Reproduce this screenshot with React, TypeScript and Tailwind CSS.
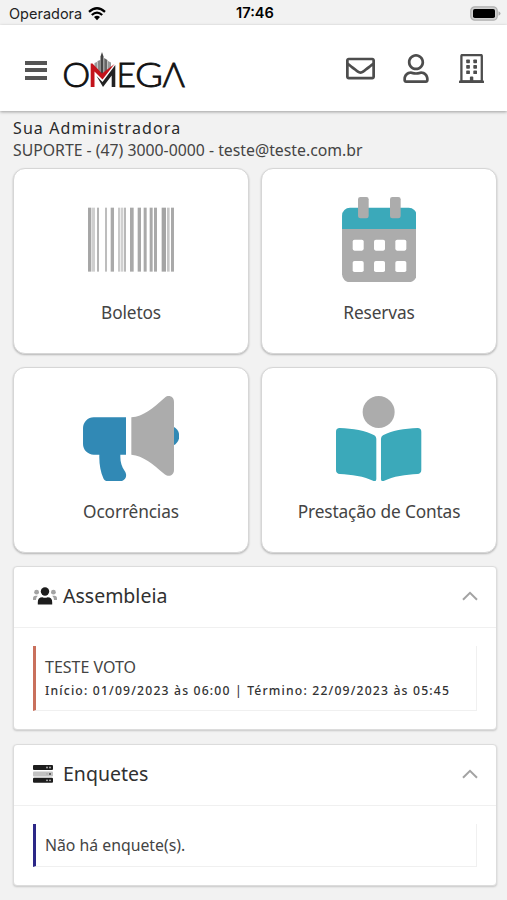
import { ReactNode, useState } from "react";
import { FaRegEnvelope, FaRegUser } from "react-icons/fa";

// [x, width, fill]
const bars: [number, number, string][] = [
  [264, 10, "#a6a6a6"],
  [276, 9, "#cfcfcf"],
  [291, 6, "#b4b4b4"],
  [315, 6, "#bdbdbd"],
  [332, 10, "#a9a9a9"],
  [354, 7, "#c9c9c9"],
  [363, 7, "#d0d0d0"],
  [372, 6, "#b8b8b8"],
  [390, 11, "#a9a9a9"],
  [413, 10, "#a9a9a9"],
  [431, 9, "#a9a9a9"],
  [449, 9, "#a9a9a9"],
  [462, 9, "#a9a9a9"],
  [485, 13, "#a4a4a4"],
  [501, 8, "#c6c6c6"],
  [513, 9, "#a9a9a9"],
];

function BarcodeIcon() {
  return (
    <svg viewBox="264 0 258 256" className="h-[85.3px] w-[86px]">
      {bars.map(([x, width, fill]) => (
        <rect key={x} x={x} y="32" width={width} height="192" fill={fill} />
      ))}
    </svg>
  );
}

function CalendarIcon() {
  return (
    <svg viewBox="0 0 448 512" className="h-[85.3px] w-[74.7px]">
      <path d="M0 192h448v272a48 48 0 0 1-48 48H48a48 48 0 0 1-48-48z" fill="#acacac" />
      <path d="M0 192v-80a48 48 0 0 1 48-48h352a48 48 0 0 1 48 48v80z" fill="#3ba9ba" />
      {[96, 288].map((x) => (
        <rect key={x} x={x} y="0" width="64" height="128" rx="14" fill="#acacac" />
      ))}
      {[256, 384].map((y) =>
        [64, 192, 320].map((x) => (
          <rect key={`${x}-${y}`} x={x} y={y} width="66" height="66" rx="11" fill="#fff" />
        ))
      )}
    </svg>
  );
}

function MegaphoneIcon() {
  return (
    <svg viewBox="0 0 576 512" className="h-[85.3px] w-24">
      <path
        d="M64 128h194v224h-34v14c0 32 8 58 26 84 20 28 4 62-28 62h-72c-14 0-22-6-28-18-18-42-26-88-24-142H64a64 64 0 0 1-64-64v-96a64 64 0 0 1 64-64z"
        fill="#3189b5"
      />
      <path d="M544 184c20 9 34 32 34 56s-14 47-34 56z" fill="#3189b5" />
      <path
        d="M290 128c74-6 126-52 202-119 22-18 54-6 54 25v412c0 31-32 43-54 25-76-65-130-112-202-119z"
        fill="#acacac"
      />
    </svg>
  );
}

function ReaderIcon() {
  const page =
    "M22 192c78 2 158 16 208 44q12 8 12 20v242q0 17-16 12C170 482 90 471 24 468q-24-2-24-24V214q0-21 22-22z";
  return (
    <svg viewBox="0 0 512 512" className="size-[85.3px]">
      <circle cx="256" cy="96" r="96" fill="#acacac" />
      <path d={page} fill="#3ba9ba" />
      <path d={page} fill="#3ba9ba" transform="matrix(-1 0 0 1 512 0)" />
    </svg>
  );
}

function BuildingIcon() {
  return (
    <svg viewBox="0 0 25 29" className="h-[29px] w-[25px]" fill="#4d4d4d">
      <rect x="2.4" y="1" width="20.4" height="26.5" rx="1" fill="none" stroke="#4d4d4d" strokeWidth="2.3" />
      <rect x="0" y="26.6" width="25" height="2.4" rx="0.6" />
      {[5.6, 11, 16.4].map((y) => (
        <g key={y}>
          <rect x="7.2" y={y} width="3.7" height="3.7" rx="0.7" />
          <rect x="14.3" y={y} width="3.7" height="3.7" rx="0.7" />
        </g>
      ))}
      <path d="M10.9 28v-4.6q0-1 1-1h1.4q1 0 1 1V28z" />
    </svg>
  );
}

function UsersIcon() {
  return (
    <svg viewBox="0 0 24 18" className="h-[18px] w-6">
      <g fill="#a3a3a3">
        <circle cx="3.6" cy="5.2" r="2.4" />
        <circle cx="20.4" cy="5.2" r="2.4" />
        <path d="M0 13v-1.5q0-2.7 2.6-2.7h2.2q-1.8 1.6-1.8 4.2z" />
        <path d="M24 13v-1.5q0-2.7-2.6-2.7h-2.2q1.8 1.6 1.8 4.2z" />
      </g>
      <g fill="#1d1d1d">
        <circle cx="12" cy="4.5" r="4.2" />
        <path d="M4.8 17.4v-2.2q0-5 4.6-5 2.6 1.2 5.2 0 4.6 0 4.6 5v2.2z" />
      </g>
    </svg>
  );
}

function ServerIcon() {
  return (
    <svg viewBox="0 0 20 18" className="h-[18px] w-5">
      <rect y="0" width="20" height="5" rx="1" fill="#1d1d1d" />
      <rect y="6.4" width="20" height="5" rx="1" fill="#c2c2c2" />
      <rect y="12.8" width="20" height="5" rx="1" fill="#1d1d1d" />
      {[2.5, 15.3].map((y) => (
        <g key={y} fill="#bdbdbd">
          <circle cx="14" cy={y} r="0.9" />
          <circle cx="17" cy={y} r="0.9" />
        </g>
      ))}
      <circle cx="14" cy="8.9" r="0.7" fill="#999" />
      <circle cx="17" cy="8.9" r="1" fill="#444" />
    </svg>
  );
}

function Logo() {
  return (
    <svg
      viewBox="0 0 124 50"
      className="h-[50px] w-[124px] overflow-visible"
      fontFamily="Lato, sans-serif"
      fontSize="33.5"
      fontWeight="300"
    >
      <g fill="#111" stroke="#111" strokeWidth="0.8">
        <text x="-0.8" y="37.7" textLength="28" lengthAdjust="spacingAndGlyphs">O</text>
        <text x="53.5" y="37.7" textLength="19.5" lengthAdjust="spacingAndGlyphs">E</text>
        <text x="72" y="37.7" textLength="28" lengthAdjust="spacingAndGlyphs">G</text>
        <text x="99.5" y="37.7" textLength="22.5" lengthAdjust="spacingAndGlyphs">Λ</text>
      </g>
      {/* skyline behind the M */}
      <path d="M31.5 18v-4l2.500-1v8zM45 21v-9l3 1.500v6z" fill="#999" />
      <path d="M34.500 24V12l2.800-1v15z" fill="#888" />
      <path d="M37.500 27V7.500L39 3l1.500 4.500V26z" fill="#444" />
      <path d="M41.200 25V9l3.200 2v12z" fill="#666" />
      <path d="M27.700 38V14.500h1.800l9.500 10L51.500 15 39.500 30.500l-8-8V38z" fill="#c3131b" />
      <path d="M33.500 27l6 6L52.300 16V38h-3.600V26.500L40 38z" fill="#222" />
    </svg>
  );
}

function StatusBar() {
  return (
    <div className="flex h-[25px] items-center justify-between bg-[#f2f2f2] pl-[9px] pr-[6px] font-['Inter',sans-serif] text-[15px] text-[#222]">
      <div className="flex w-[180px] items-center gap-[6px] pt-[2px]">
        <span className="text-[14.5px]">Operadora</span>
        <svg viewBox="0 0 18 14" className="h-[14px] w-[18px]" fill="none" stroke="#000" strokeWidth="2.3">
          <path d="M1 4.8Q9-2.2 17 4.8" />
          <path d="M3.8 8Q9 3.3 14.2 8" />
          <path d="M6 9.9q3-2.5 6 0L9 13.3z" fill="#000" stroke="none" />
        </svg>
      </div>
      <span className="pt-[3px] text-[14.6px] font-semibold text-black">17:46</span>
      <div className="flex w-[180px] justify-end pt-[1px]">
        <svg viewBox="0 0 31 15" className="h-[15px] w-[31px]">
          <rect x="0.8" y="0.8" width="26.4" height="13.4" rx="4" fill="#d0d0d0" stroke="#b0b0b0" strokeWidth="1.3" />
          <rect x="3" y="3" width="22" height="9" rx="1.8" fill="#000" />
          <path d="M28.5 5.2q2 .8 2 2.3t-2 2.3z" fill="#aaa" />
        </svg>
      </div>
    </div>
  );
}

function Tile({ label, children }: { label: string; children: ReactNode }) {
  return (
    <button
      type="button"
      className="flex h-[186px] flex-col items-center rounded-[12px] border border-[#d6d6d6] bg-white pt-[28px] shadow-[0_1px_2px_rgba(0,0,0,0.25)]"
    >
      {children}
      <span className="mt-[18.5px] text-[17.3px] leading-6 tracking-[-0.14px]">{label}</span>
    </button>
  );
}

function Panel({ title, icon, children }: { title: string; icon: ReactNode; children: ReactNode }) {
  const [open, setOpen] = useState(true);

  return (
    <section className="rounded-[4px] border border-[#dcdcdc] bg-white shadow-[0_1px_2px_rgba(0,0,0,0.18)]">
      <button
        type="button"
        onClick={() => setOpen(!open)}
        className="flex h-[61px] w-full items-center border-b border-[#f0f0f0] pb-[2px] pl-[19px] pr-[18px]"
      >
        <span className="flex w-[30px]">{icon}</span>
        <span className="flex-1 text-left text-[19.5px] text-[#303030]">{title}</span>
        <svg viewBox="0 0 16 10" className="h-[10px] w-4" fill="none" stroke="#a3a3a3" strokeWidth="2">
          <path d={open ? "M1 8.8L8 1.8l7 7" : "M1 1.2l7 7 7-7"} />
        </svg>
      </button>
      {open && <div className="px-[19px] pb-[18px] pt-[18px]">{children}</div>}
    </section>
  );
}

export default function App() {
  return (
    <div className="h-[900px] w-[507px] overflow-hidden bg-[#f2f2f2] font-['Noto_Sans',sans-serif] text-[#444]">
      <StatusBar />
      <header className="relative flex h-[86px] items-center bg-white pl-[25px] pr-[23px] shadow-[0_1px_3px_rgba(0,0,0,0.35)]">
        <button type="button" aria-label="Menu" className="mt-[4px] flex w-[22px] flex-col gap-[3.5px]">
          <span className="h-[4px] bg-[#555]" />
          <span className="h-[4px] bg-[#555]" />
          <span className="h-[4px] bg-[#555]" />
        </button>
        <div className="ml-4 mt-3">
          <Logo />
        </div>
        <div className="ml-auto flex items-center gap-[28px] text-[#4d4d4d]">
          <FaRegEnvelope size={29} />
          <FaRegUser size={29} className="mr-[2px] w-[26px]" />
          <BuildingIcon />
        </div>
      </header>

      <main className="pl-[13px] pr-[10px] pt-[6px]">
        <h1 className="text-[16px] leading-[22px] tracking-[1.1px] text-[#2a2a2a]">Sua Administradora</h1>
        <p className="text-[15.8px] leading-[22px]">SUPORTE - (47) 3000-0000 - teste@teste.com.br</p>

        <div className="mt-[7px] grid grid-cols-2 gap-x-3 gap-y-[13px]">
          <Tile label="Boletos">
            <BarcodeIcon />
          </Tile>
          <Tile label="Reservas">
            <CalendarIcon />
          </Tile>
          <Tile label="Ocorrências">
            <MegaphoneIcon />
          </Tile>
          <Tile label="Prestação de Contas">
            <ReaderIcon />
          </Tile>
        </div>

        <div className="mt-[13px] flex flex-col gap-[14px]">
          <Panel title="Assembleia" icon={<UsersIcon />}>
            <div className="flex h-[65px] flex-col border-b border-l-[3px] border-r border-b-[#f0f0f0] border-l-[#c9705c] border-r-[#f0f0f0] pl-[9px] pt-[10px]">
              <p className="text-[16px] leading-[22px]">TESTE VOTO</p>
              <p className="mt-[2px] whitespace-nowrap text-[12.2px] font-medium leading-[22px] tracking-[1.17px] text-[#333]">
                Início: 01/09/2023 às 06:00 | Término: 22/09/2023 às 05:45
              </p>
            </div>
          </Panel>
          <Panel title="Enquetes" icon={<ServerIcon />}>
            <div className="flex h-[43px] items-center border-b border-l-[3px] border-r border-b-[#f0f0f0] border-l-[#2c2787] border-r-[#f0f0f0] pl-[9px] pt-[2px]">
              <p className="text-[15.8px]">Não há enquete(s).</p>
            </div>
          </Panel>
          <div className="h-5 rounded-[4px] border border-[#dcdcdc] bg-white" />
        </div>
      </main>
    </div>
  );
}
